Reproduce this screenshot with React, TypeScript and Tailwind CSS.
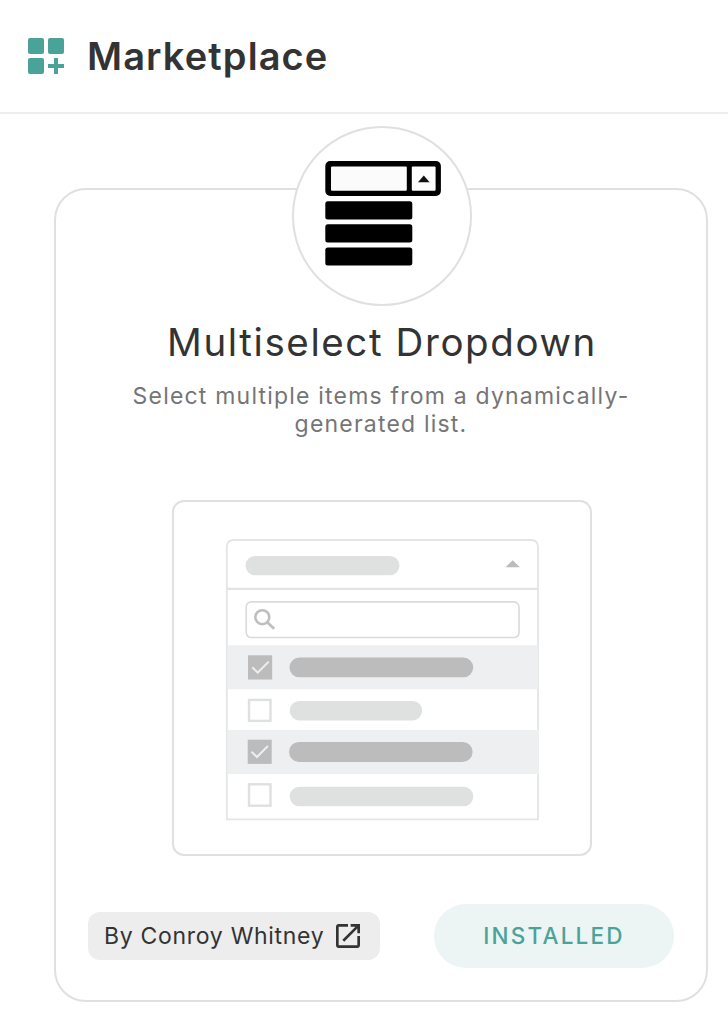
function MarketplaceIcon() {
  return (
    <svg className="size-9 shrink-0" viewBox="0 0 36 36" fill="#4aa399" aria-hidden="true">
      <rect width="16" height="16" rx="2" />
      <rect x="20" width="16" height="16" rx="2" />
      <rect y="20" width="16" height="16" rx="2" />
      <path d="M26 20h4v6h6v4h-6v6h-4v-6h-6v-4h6z" />
    </svg>
  );
}

function DropdownLogo() {
  return (
    <svg className="size-44" viewBox="294 128 176 176" aria-hidden="true">
      <rect x="325.3" y="161" width="115.6" height="35" rx="5" fill="#000" />
      <rect x="331" y="166.6" width="75.8" height="24.2" rx="1" fill="#fbfbfb" />
      <rect x="411.8" y="166.6" width="23.8" height="24.2" rx="1" fill="#fdfdfd" />
      <path d="M418 182.2l5.8-6.6 5.8 6.6z" fill="#111" />
      <rect x="325.3" y="201.2" width="87" height="18.2" rx="2.5" />
      <rect x="325.3" y="224.3" width="87" height="18.2" rx="2.5" />
      <rect x="325.3" y="247.4" width="87" height="18.2" rx="2.5" />
    </svg>
  );
}

function DropdownPreview() {
  return (
    <svg className="h-[352px] w-[416px]" viewBox="174 502 416 352" fill="none" aria-hidden="true">
      <path d="M226.8 819.3V547q0-7 7-7H531q7 0 7 7v272.3z" stroke="#e3e6e5" strokeWidth="1.8" />
      <path d="M227 588.8h311" stroke="#e1e4e3" strokeWidth="2.2" />
      <rect x="245.5" y="556" width="154" height="19.3" rx="9.65" fill="#dfe1e0" />
      <path d="M505.5 567.2l7.2-7 7.2 7z" fill="#bcbcbc" />
      <rect x="246.2" y="601.9" width="272.8" height="35.6" rx="5" stroke="#dadcdb" strokeWidth="1.7" />
      <circle cx="262.3" cy="617.2" r="7" stroke="#bfbfbf" strokeWidth="2.6" />
      <path d="M267.5 622.5l6.7 6.3" stroke="#bfbfbf" strokeWidth="2.8" />
      <path d="M227.7 645.3H538v44H227.7zM227.7 730H539v44H227.7z" fill="#eeeff1" />
      <rect x="248" y="655.3" width="24.2" height="24.2" fill="#bcbcbc" />
      <path d="M252.3 667.3l5.4 5.3 11-11" stroke="#eeeff1" strokeWidth="2" />
      <rect x="289.5" y="657.5" width="183.7" height="19.8" rx="9.9" fill="#bcbcbc" />
      <rect x="249" y="699.9" width="21.5" height="21" stroke="#dfe1e0" strokeWidth="2.4" />
      <rect x="289.7" y="701" width="132.5" height="19.4" rx="9.7" fill="#dfe1e0" />
      <rect x="247.7" y="739.7" width="24" height="24.2" fill="#bcbcbc" />
      <path d="M251.5 751.7l5.4 5.3 11-11" stroke="#eeeff1" strokeWidth="2" />
      <rect x="289" y="741.9" width="183.6" height="20" rx="10" fill="#bcbcbc" />
      <rect x="249" y="784.3" width="21.5" height="21.4" stroke="#dfe1e0" strokeWidth="2.4" />
      <rect x="289.7" y="786.7" width="183.6" height="19.6" rx="9.8" fill="#dfe1e0" />
    </svg>
  );
}

function ExternalLinkIcon() {
  return (
    <svg className="size-6 shrink-0" viewBox="3 3 18 18" fill="#333" aria-hidden="true">
      <path d="M19 19H5V5h7V3H5c-1.11 0-2 .9-2 2v14c0 1.1.89 2 2 2h14c1.1 0 2-.9 2-2v-7h-2v7zM14 3v2h3.59l-9.83 9.83 1.41 1.41L19 6.41V10h2V3h-7z" />
    </svg>
  );
}

export default function App() {
  return (
    <div className="h-[1026px] w-[728px] overflow-hidden bg-white font-['Inter',sans-serif] text-[#333]">
      <header className="flex h-[114px] items-center gap-[23px] border-b-2 border-[#ededed] pl-7">
        <MarketplaceIcon />
        <h1 className="text-[38px] leading-[48px] font-semibold tracking-[1.1px] whitespace-nowrap">Marketplace</h1>
      </header>
      <main className="pt-[74px] pr-5 pl-[54px]">
        <article className="flex h-[814px] flex-col items-center rounded-[32px] border-2 border-[#e0e0e0] px-8 pb-8">
          <div className="-mt-16 ml-0.5 size-[180px] shrink-0 overflow-hidden rounded-full border-2 border-[#e0e0e0] bg-white">
            <DropdownLogo />
          </div>
          <h2 className="mt-3 pl-0.5 text-[38.5px] leading-[48px] tracking-[1.6px] whitespace-nowrap">Multiselect Dropdown</h2>
          <p className="mt-4 text-center text-[23px] leading-7 tracking-[1.2px] whitespace-nowrap text-[#757575]">
            Select multiple items from a dynamically-
            <br />
            generated list.
          </p>
          <div className="mt-[62px] ml-0.5 shrink-0 rounded-xl border-2 border-[#e0e0e0]">
            <DropdownPreview />
          </div>
          <footer className="mt-auto flex w-full items-center justify-between">
            <a className="flex h-12 w-[292px] items-center justify-between rounded-xl bg-[#ededed] pr-5 pl-4 text-[23px] whitespace-nowrap">
              <span className="tracking-[0.7px]">By Conroy Whitney</span>
              <ExternalLinkIcon />
            </a>
            <button className="h-16 w-60 rounded-full bg-[#ecf5f4] text-[22.5px] font-medium tracking-[2.2px] text-[#4aa399]">
              INSTALLED
            </button>
          </footer>
        </article>
      </main>
    </div>
  );
}
